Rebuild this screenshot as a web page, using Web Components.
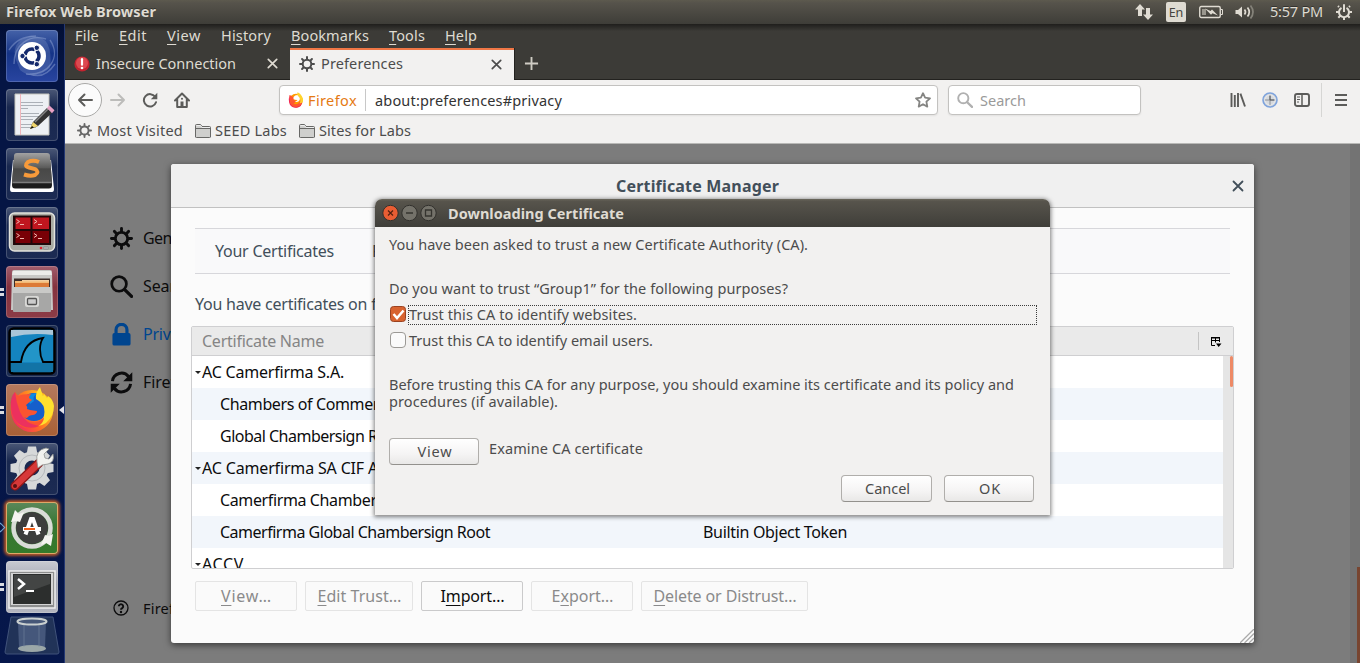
<!DOCTYPE html>
<html lang="en">
<head>
<meta charset="utf-8">
<title>Preferences</title>
<style>
html,body{margin:0;height:663px;overflow:hidden}
body{font:14.5px/18px "Noto Sans","Open Sans",sans-serif;background:#7c7c7c;--lift:-1px}
</style>
</head>
<body>
<ubuntu-desktop></ubuntu-desktop>
<script>
const define=(name,html,init)=>customElements.define(name,class extends HTMLElement{
  connectedCallback(){
    if(this.shadowRoot)return;
    const t=document.createElement('template');
    t.innerHTML=typeof html==='function'?html(this):html;
    this.attachShadow({mode:'open'}).append(t.content.cloneNode(true));
    if(init)init(this);
  }
});

/* A single-line label tracked to a given width; <u> marks its access key. */
define('fit-text','<style>:host{display:inline-block;white-space:pre;flex:none;transform:translateY(var(--lift,0))}span{display:inline-block;text-underline-offset:3px;text-decoration-thickness:1px}</style><span><slot></slot></span>',el=>{
  const w=+el.getAttribute('w'),s=el.shadowRoot.querySelector('span');
  if(!w)return;
  el.style.width=w+'px';
  s.style.letterSpacing=((w-s.getBoundingClientRect().width)/el.textContent.length).toFixed(4)+'px';
});

const gear=()=>{let s='';for(let i=0;i<8;i++)s+=`<path d="M0-7V-5" transform="rotate(${i*45})"/>`;return `<g transform="translate(8 8)" fill="none" stroke="currentColor" stroke-width="2" stroke-linecap="round"><circle r="4.300"/>${s}</g>`};
const icons={
 back:'<path d="M15 8H2M7.5 2.5 2 8l5.500 5.500" fill="none" stroke="currentColor" stroke-width="2" stroke-linecap="round" stroke-linejoin="round"/>',
 forward:'<path d="M1 8h13M8.500 2.500 14 8l-5.500 5.500" fill="none" stroke="currentColor" stroke-width="2" stroke-linecap="round" stroke-linejoin="round"/>',
 reload:'<path d="M13.200 4.800A6.200 6.200 0 1 0 14 10.200" fill="none" stroke="currentColor" stroke-width="2" stroke-linecap="round"/><path d="M15.300.800v6.500H8.800z" fill="currentColor"/>',
 home:'<path d="M1 8.500 8 1.500l7 7M3.200 7.500V15h9.600V7.500" fill="none" stroke="currentColor" stroke-width="2" stroke-linecap="round" stroke-linejoin="round"/><path d="M6.500 15V9.500h3V15z" fill="currentColor"/><circle cx="8" cy="6.800" r="1" fill="currentColor"/>',
 gear:gear(),
 close:'<path d="M3.500 3.500l9 9M12.500 3.500l-9 9" stroke="currentColor" stroke-width="1.800" stroke-linecap="round"/>',
 plus:'<path d="M8 1v14M1 8h14" stroke="currentColor" stroke-width="2"/>',
 error:'<circle cx="8" cy="8" r="7.600" fill="#c4232f"/><circle cx="8" cy="7" r="6" fill="#dc4950"/><path d="M8 3.200v5.500" stroke="#fff" stroke-width="2.200" stroke-linecap="round"/><circle cx="8" cy="12" r="1.300" fill="#fff"/>',
 folder:'<path d="M.500 14V2.500q0-1 1-1h4l1.500 2h7.500q1 0 1 1V14q0 .500-1 .500h-13q-1 0-1-.500z" fill="#cfcfcd" stroke="#686866"/><path d="M1 5.500h14.500" stroke="#686866"/><path d="M1.500 2.500h4l1.500 2h8" stroke="#eee" fill="none"/>',
 star:'<path d="M8 1.200l2.100 4.500 4.900.600-3.600 3.400.900 4.900L8 12.200l-4.300 2.400.900-4.900L1 6.300l4.900-.600z" fill="none" stroke="currentColor" stroke-width="1.800" stroke-linejoin="round"/>',
 search:'<circle cx="6.300" cy="6.200" r="5.100" fill="none" stroke="currentColor" stroke-width="1.900"/><path d="M10.200 10.200l4.800 4.700" stroke="currentColor" stroke-width="2.300" stroke-linecap="round"/>',
 library:'<path d="M1.500 1v14M4.800 3v12M8 1v14" stroke="currentColor" stroke-width="1.900"/><path d="M10.400 1.600 15 14.500" stroke="currentColor" stroke-width="1.900"/>',
 globe:'<circle cx="8" cy="8" r="7" fill="#d6d9dd" stroke="#7ea3dc" stroke-width="1.600"/><circle cx="8" cy="8" r="5" fill="none" stroke="#f3f3f3" stroke-width=".600"/><path d="M3 8h10M8 3v10" stroke="#8b9097"/><path d="M8 4v4h4" stroke="#55595e" fill="none"/>',
 sidebar:'<rect x="1" y="2" width="14" height="12" rx="2" fill="none" stroke="currentColor" stroke-width="1.900"/><path d="M8 2v12" stroke="currentColor" stroke-width="1.500"/><path d="M3 5h3M3 7.500h3M3 10h2" stroke="currentColor" stroke-width="1"/>',
 menu:'<path d="M2 3h12M2 8h12M2 13h12" stroke="currentColor" stroke-width="2"/>',
 lock:'<path d="M4.200 8V4.700a3.800 3.800 0 0 1 7.600 0V8" fill="none" stroke="currentColor" stroke-width="2.200"/><rect x="1.700" y="7" width="12.600" height="8.700" rx="1.300" fill="currentColor"/>',
 sync:'<path d="M1.700 7A6.300 6.300 0 0 1 13 4M14.300 9A6.300 6.300 0 0 1 3 12" fill="none" stroke="currentColor" stroke-width="2.100"/><path d="M15.500.800v6.400H9.200zM.500 15.200V8.800h6.300z" fill="currentColor"/>',
 help:'<circle cx="8" cy="8" r="7" fill="none" stroke="currentColor" stroke-width="1.300"/><path d="M5.800 6.300a2.200 2.100 0 1 1 3.400 1.800Q8 8.800 8 9.800" fill="none" stroke="currentColor" stroke-width="1.900"/><circle cx="8" cy="12" r="1.200" fill="currentColor"/>',
 picker:'<path d="M7 12.500H3.500v-8h8V9M3.500 7.500h8M7.500 4.500v5" fill="none" stroke="#000"/><path d="M3 4h9v1.500H3zM8 10.500h5.500L10.700 14z"/>',
 firefox:'<circle cx="8" cy="8.600" r="6.800" fill="#ff9a00"/><path d="M1.500 3q0 4 1.500 6 2 4 5 4 3.500-.300 5-4 2.400 4-2.500 6.200Q5 17 1.800 12.500 0 8 1.500 3z" fill="#f0225c"/><path d="M1.500 3q2 .500 3 1.800l2.800.200-2 2.500q.500 1 3 1.200Q7 11 5.500 11.500 10 14 12.500 8q3 5-3 6.800Q4 16 2 11z" fill="#ff5630"/><path d="M9.500.300q-1 3.200 1.500 4.700 2.500 3 .500 6.500 4-.500 3.500-4.500Q13.500 2 9.500.300z" fill="#ffd42c"/><path d="M5.500 5q1.500-2 3.800-2 3 2.500 2.400 5Q10 11 7 9.500q2-.300 2.500-1.500-3-.200-4-1z" fill="#fff"/>'
};
define('ui-icon',el=>`<style>:host{display:block;flex:none;width:${el.getAttribute('size')||16}px;height:${el.getAttribute('size')||16}px}svg{display:block;width:100%;height:100%}</style><svg viewBox="0 0 16 16">${icons[el.getAttribute('name')]}</svg>`);

/* ---------- top panel ---------- */
define('top-panel',`<style>
:host{display:flex;align-items:center;height:24px;box-sizing:border-box;padding:0 8px 0 6px;background:linear-gradient(#5d5a4e,#56534b 12%,#3e3d38);color:#dfdbd2;text-shadow:0 -1px #33322e}
b{flex:1}svg{display:block;flex:none}.en{background:#dfdbd2;color:#45443e;width:20px;height:20px;border-radius:2px;margin-right:13px;text-align:center;font-size:12.5px;line-height:21px;text-shadow:none}
</style>
<b><fit-text w="150">Firefox Web Browser</fit-text></b>
<svg width="18" height="18" viewBox="0 0 18 18" style="margin-right:13px" fill="#dfdbd2"><path d="M5 1 0 6.500h3V13h4V6.500h3zM13 17l-5-5.500h3V5h4v6.500h3z"/></svg>
<span class="en">En</span>
<svg width="25" height="14" viewBox="0 0 25 14" style="margin-right:11px"><rect x=".750" y="1.500" width="20.500" height="11" rx="1.500" fill="none" stroke="#dfdbd2" stroke-width="1.400"/><path d="M3 4h4v6H3z" fill="#9a978e"/><path d="M22 4.500h1.500v5H22" fill="none" stroke="#dfdbd2"/><path d="M6 3.500l5.500 2.500 1.500-1.500L19 10.500l-5.500-2.300-1.500 1.500z" fill="#dfdbd2"/></svg>
<svg width="20" height="16" viewBox="0 0 20 16" style="margin-right:15px" fill="none" stroke="#dfdbd2" stroke-width="1.700"><path d="M.500 6H3l4-3.500v11L3 10H.500z" fill="#dfdbd2" stroke="none"/><path d="M9.500 5.500q2 2.500 0 5M12.500 3.500q3.500 4.500 0 9"/><path d="M15.500 1.500q5 6.500 0 13" stroke="#85837a"/></svg>
<fit-text w="53">5:57 PM</fit-text>
<svg width="16" height="16" viewBox="-8 -8 16 16" style="margin-left:13px" fill="none" stroke="#dfdbd2" stroke-width="2"><path d="M-2.500-4.200A5 5 0 1 0 2.500-4.200M0-7.800V0M5-5 6-6M5 0h3M4 4l1.700 1.700M0 5v3M-4 4l-1.700 1.700M-5 0h-3M-5-5l-1-1"/></svg>`);

/* ---------- launcher ---------- */
let cog='';for(let i=0;i<8;i++)cog+=`<path d="M-4-21.500h8l1.500 8h-11z" transform="rotate(${i*45})"/>`;
const art={
 dash:'<g fill="none" stroke="#8ba0d2" stroke-width="1.400" opacity=".500"><path d="M8 34C8 14 24 4 40 9M44 10C56 28 42 46 20 44M3 20Q12 6 30 6M49 34Q38 50 24 44"/></g><path d="M10 30Q4 12 24 6 48 4 44 38 28 52 14 40z" fill="#a9b9df" opacity=".220"/><circle cx="26" cy="26" r="14" fill="#fff"/><circle cx="26" cy="26" r="7" fill="none" stroke="#14296c" stroke-width="3.500" stroke-dasharray="12.700 2" stroke-dashoffset="6.400"/><g fill="#14296c" stroke="#fff"><circle cx="16.500" cy="26" r="2.700"/><circle cx="30.800" cy="17.800" r="2.700"/><circle cx="30.800" cy="34.200" r="2.700"/></g>',
 edit:'<path d="M9 5h34v41H9z" fill="#edf0f4" stroke="#c5c5bd"/><path d="M14.500 5v41" stroke="#efb6bb"/><path d="M15 13.500h22M15 16.500h22M15 19.500h7M15 24.500h18M15 27.500h22M15 30.500h12M15 35.500h18M15 38.500h15" stroke="#a4a8b0" stroke-width=".900"/><path d="M24 40l3-7L41 19l5 5-14 13z" fill="#333"/><path d="M29 33 42 20" stroke="#858585" stroke-width="1.500"/><path d="M24 40l3-7 5 4z" fill="#f2d76c"/><path d="M24 40l2-3 2 1.500z" fill="#111"/><path d="M41 19l2.500-2.500 5 4.800-2.500 3z" fill="#e9a2c6"/>',
 sublime:'<defs><linearGradient id="k" x1="0" y1="0" x2="0" y2="1"><stop stop-color="#a2a2a2"/><stop offset=".500" stop-color="#5c5c5b"/><stop offset=".550" stop-color="#484847"/><stop offset="1" stop-color="#505050"/></linearGradient></defs><path d="M7 12 4 41q0 3 2 3h40q2 0 2-3l-3-29z" fill="#fff"/><path d="M8 8 6 37q0 3.500 3 3.500h34q3 0 3-3.500L44 8z" fill="#1c1c1c"/><path d="M8 8q0-3 3-3h30q3 0 3 3l2 26H6z" fill="url(#k)"/><path d="M6.500 34.500h39" stroke="#7d7d7d" stroke-width="1.300"/><path d="M33 14q-6-2.500-11 0-4.500 4 1 5.500l6 1.500q5 3 0 6-5 1.500-11-.500" fill="none" stroke="#f79a3a" stroke-width="4"/>',
 monitor:'<rect x="3.500" y="6" width="45" height="38" rx="5" fill="#a9aba3" stroke="#e4e3dd" stroke-width="1.500"/><rect x="7" y="8.500" width="38" height="29.500" fill="#21080a"/><path d="M9.500 10.500h15v11.500H9.500zM26.500 10.500h16.500v11.500H26.500z" fill="#c0161f"/><path d="M9.500 24h15V36H9.500zM26.500 24H43V36H26.500z" fill="#790006"/><path d="M10.500 12.500l3 2-3 2M14 17.500h4M28 12.500l3 2-3 2M32 17.500h4M10.500 26.500l3 2-3 2M14 31.500h4M28 26.500l3 2-3 2M32 31.500h4" fill="none" stroke="#f0b5ae"/><circle cx="35" cy="41" r="1.300" fill="#e02030"/><rect x="37.500" y="39.500" width="5" height="3" rx="1" fill="#aaa" stroke="#888" stroke-width=".600"/>',
 files:'<path d="M6 6q0-2 2-2h36q2 0 2 2l1 38H5z" fill="#c8c8c6"/><path d="M7 5h38l1 4H6z" fill="#ececea"/><path d="M8 12.500h36v10H8z" fill="#3c2d28"/><path d="M9 15h34v4H9z" fill="#f3ba76"/><path d="M9 17h34v4H9z" fill="#dc7a37"/><path d="M16 14h27v1.500H16z" fill="#f2cfa0"/><path d="M7 21h38v24q0 1-1 1H8q-1 0-1-1z" fill="#a7a7a6"/><path d="M7 21h38v6H7z" fill="#c9c9c7"/><rect x="19" y="30" width="14" height="11" rx="2" fill="#d8d8d6"/><rect x="21.500" y="32.500" width="9" height="6" rx="1" fill="#ccc" stroke="#555" stroke-width="1.300"/>',
 shark:'<rect x="3.500" y="3.500" width="45" height="45" rx="4" fill="#1484bf" stroke="#000" stroke-width="2.500"/><path d="M5 5h42v5Q26 7 5 12z" fill="#a9c6d8"/><path d="M4 37h11c2-13 8-22 22-24-4 6-4 16 0 24h11" fill="#2295c8" stroke="#000" stroke-width="1.800"/><path d="M5 38h42v9H5z" fill="#1274a6"/>',
 fox:'<defs><linearGradient id="b" x1="0" y1=".800" x2="1" y2=".200"><stop stop-color="#f0206a"/><stop offset=".450" stop-color="#ff6a26"/><stop offset=".800" stop-color="#ffb31c"/></linearGradient></defs><circle cx="26" cy="27" r="21" fill="url(#b)"/><circle cx="28" cy="23" r="14" fill="#165fcb"/><path d="M20 13q5-4 12-4-6 3-4 8l-4 3z" fill="#0c8ce0"/><path d="M34 3q-5 6-4 12 7 4 8 9 2 9-4 13-8 4-15 1 11 8 21 1 8-7 8-17-1-7-6-10l-1 2-3-4-1 2z" fill="#ffe02e"/><path d="M9 8q2 3 4 4 2-2 12-2-2 2-2 4l3 2-6 5q2 2 1 4l3 1 7 1q0 3-4 4-4 0-6 3-4 0-6-3 5 9 15 7 5-1 8-5 0 6-7 10-9 4-18-2Q1 30 6 15l1 1q0-5 2-8z" fill="#fb5430"/><path d="M9 8Q4 13 5 22q0 16 14 21 8 2 14-1-14-2-19-14Q10 18 9 8z" fill="#e8286a" opacity=".800"/>',
 tools:`<g transform="translate(26 25)"><g fill="#d6d8d9">${cog}</g><circle r="12" fill="none" stroke="#d6d8d9" stroke-width="9"/><circle r="13" fill="none" stroke="#b7babd" stroke-width="1"/></g><path d="M9 43 33 20" stroke="#8f1515" stroke-width="9" stroke-linecap="round"/><path d="M9 43 33 20" stroke="#d73838" stroke-width="6.500" stroke-linecap="round"/><path d="M31 19q-2-12 9-14l3 1-5 5 1 4 4 1 4-5q2 8-5 10l-6 1-4 3z" fill="#f2f2ef" stroke="#8e908e" stroke-width=".800"/><circle cx="9" cy="43" r="2" fill="#5a1010"/>`,
 updater:'<circle cx="26" cy="26" r="16" fill="#3d3e3d"/><circle cx="26" cy="26" r="18.500" fill="none" stroke="#d9dcd7" stroke-width="4.500"/><path d="M5 20 9 8l4 4 5-2-4 10-4-1zM47 32l-2 12-5-3-5 2 4-10 4 1z" fill="#f4f4f0"/><path d="M19.500 32.500 25 17h2l5.500 15.500" fill="none" stroke="#fff" stroke-width="4"/><path d="M17 27h18" stroke="#fff" stroke-width="4"/><path d="M18 27h11" stroke="#f26019" stroke-width="2"/>',
 terminal:'<rect x="3" y="10" width="46" height="37" fill="#8d8e8e" stroke="#f0f0f0" stroke-width="1.500"/><rect x="5" y="12" width="42" height="32" fill="#d4d4d4"/><rect x="7" y="13" width="38" height="30" fill="#2c2e2d"/><path d="M8 14h36v9L8 36z" fill="#434544"/><path d="M12 18l6 5-6 5" fill="none" stroke="#fff" stroke-width="2.500"/><path d="M20 30h8" stroke="#fff" stroke-width="2"/>'
};
define('launcher-item',el=>{const bg=el.getAttribute('bg')||'linear-gradient(#4b5877,#18274f 35%,#1c2b53)';return `<style>
:host{display:block;position:relative;width:52px;height:52px;border-radius:4px;background:${bg};box-shadow:inset 0 0 0 1px rgba(255,255,255,.18)}
:host([glow]){box-shadow:inset 0 0 0 1px #dfa768,0 0 3px 2px #b45728}
svg{display:block}i{position:absolute;left:-6px;top:22px;width:4px;height:3px;background:#d9dbe1;box-shadow:0 5px #d9dbe1}
em{position:absolute;right:-6px;top:22px;border:solid transparent;border-width:4px 5px 4px 0;border-right-color:#e1e2e8}
b{position:absolute;left:-9px;top:22px;width:5px;height:5px;border:1px solid #70a7d6;transform:rotate(45deg)}
</style><svg width="52" height="52" viewBox="0 0 52 52">${art[el.getAttribute('icon')]}</svg>${el.hasAttribute('run')?'<i></i>':''}${el.hasAttribute('active')?'<em></em>':''}${el.hasAttribute('glow')?'<b></b>':''}`});
define('unity-launcher',`<style>:host{display:flex;flex-direction:column;gap:7px;align-items:flex-start;width:65px;height:639px;box-sizing:border-box;padding:6px 0 0 6px;background:linear-gradient(#020f35,#051544 8%,#051544 50%,#06174b);border-right:1px solid #243873;overflow:hidden}svg{display:block;margin:-4px 0 0 -2px}</style>
<launcher-item icon="dash" bg="linear-gradient(#4562a8,#153487 45%,#2945a0)"></launcher-item><launcher-item icon="edit"></launcher-item><launcher-item icon="sublime"></launcher-item><launcher-item icon="monitor"></launcher-item>
<launcher-item icon="files" run bg="linear-gradient(#a05d6d,#85323e 40%,#8c3c47)"></launcher-item><launcher-item icon="shark" bg="#1b2b50"></launcher-item><launcher-item icon="fox" run active bg="linear-gradient(#b5795e,#a86036)"></launcher-item><launcher-item icon="tools"></launcher-item>
<launcher-item icon="updater" glow bg="linear-gradient(#5b885b,#367632 45%,#357a2b)"></launcher-item><launcher-item icon="terminal" run bg="linear-gradient(#c8cad1,#a0a3b0 45%,#b4b6bf)"></launcher-item>
<svg width="56" height="40" viewBox="0 0 56 40"><path d="M7 1h42l6 35q0 2-2 2H3q-2 0-2-2z" fill="#213358" stroke="#40527a"/><path d="M14 6l1 25q13 6 26 0l1-25z" fill="#55678a" opacity=".700"/><ellipse cx="28" cy="32.500" rx="14" ry="3.500" fill="#9ba7a8"/><path d="M20 9v22M35 9v22" stroke="#7d8da5" opacity=".500"/><ellipse cx="28" cy="5.500" rx="14.500" ry="3" fill="#465778" stroke="#c9cfcf" stroke-width="2"/></svg>`);

/* ---------- browser chrome ---------- */
define('menu-bar','<style>:host{display:flex;gap:20px;height:24px;align-items:center;padding-left:10px;color:#dfdbd2;background:linear-gradient(#1f1e1c,#3c3b37 30%)}</style><fit-text w="24"><u>F</u>ile</fit-text><fit-text w="28"><u>E</u>dit</fit-text><fit-text w="34"><u>V</u>iew</fit-text><fit-text w="50">Hi<u>s</u>tory</fit-text><fit-text w="78"><u>B</u>ookmarks</fit-text><fit-text w="36"><u>T</u>ools</fit-text><fit-text w="32"><u>H</u>elp</fit-text>');
define('browser-tab','<style>:host{display:flex;align-items:center;width:225px;height:32px;box-sizing:border-box;padding:0 10px 0 9px;color:#dfdbd2;border-bottom:1px solid #23221f}:host([selected]){background:#f2f1f0;color:#4c4c4c;border:1px solid #23221f;border-width:0 1px 0 0;box-shadow:inset 0 2px #f07746}div{flex:1;padding-left:6px;display:flex}</style><slot name="icon"></slot><div><slot></slot></div><ui-icon name="close" size="15"></ui-icon>');
define('tab-strip','<style>:host{display:flex;height:32px;background:#3c3b37}.new{flex:1;display:flex;align-items:center;padding-left:9px;border-bottom:1px solid #23221f;color:#cfccc4;height:31px}</style><browser-tab><ui-icon slot="icon" name="error"></ui-icon><fit-text w="140">Insecure Connection</fit-text></browser-tab><browser-tab selected><ui-icon slot="icon" name="gear"></ui-icon><fit-text w="82">Preferences</fit-text></browser-tab><div class="new"><ui-icon name="plus" size="15"></ui-icon></div>');
define('nav-bar',`<style>:host{display:flex;align-items:center;height:40px;background:#f2f1f0;color:#5c5c5a;--lift:0}
.back{width:32px;height:32px;border:1px solid #a9a9a7;border-radius:50%;background:#fbfbfb;display:grid;place-items:center;margin:0 8px 0 3px}
.f{display:flex;align-items:center;box-sizing:border-box;height:30px;background:#fff;border:1px solid #c3c2c0;border-radius:4px;box-shadow:0 1px 2px #0001}
.url{width:659px;margin-left:89px;padding:0 6px 0 8px}.url span{flex:1;border-left:1px solid #c8c8c8;margin-left:8px;padding-left:9px;color:#333;height:22px;line-height:22px}.s{width:193px;margin-left:10px;padding-left:8px;color:#b0b0b0}.t{display:flex;align-items:center;margin-left:auto;gap:16px}.m{border-left:1px solid #d6d6d4;padding-left:11px;margin-left:-5px;height:34px;display:flex;align-items:center;padding-right:11px}</style>
<div class="back"><ui-icon name="back"></ui-icon></div><ui-icon name="forward" style="color:#bcbcba"></ui-icon><ui-icon name="reload" style="margin-left:16px"></ui-icon><ui-icon name="home" style="margin-left:16px"></ui-icon>
<div class="f url"><ui-icon name="firefox"></ui-icon><fit-text w="49" style="color:#e57a13;margin-left:4px">Firefox</fit-text><span><fit-text w="187">about:preferences#privacy</fit-text></span><ui-icon name="star" style="color:#858583"></ui-icon></div>
<div class="f s"><ui-icon name="search"></ui-icon><fit-text w="46" style="color:#9a9a9a;margin-left:7px">Search</fit-text></div>
<div class="t"><ui-icon name="library"></ui-icon><ui-icon name="globe"></ui-icon><ui-icon name="sidebar"></ui-icon><div class="m"><ui-icon name="menu"></ui-icon></div></div>`);
define('bookmark-bar','<style>:host{display:flex;align-items:center;height:24px;box-sizing:border-box;padding:0 0 2px 12px;background:#f2f1f0;border-bottom:1px solid #b8b8b6;color:#4c4c4c}</style><ui-icon name="gear" size="15" style="color:#666;margin-right:5px"></ui-icon><fit-text w="86">Most Visited</fit-text><ui-icon name="folder" style="margin:0 4px 0 12px"></ui-icon><fit-text w="72">SEED Labs</fit-text><ui-icon name="folder" style="margin:0 4px 0 12px"></ui-icon><fit-text w="92">Sites for Labs</fit-text>');

/* ---------- preferences page ---------- */
define('side-item','<style>:host{display:flex;align-items:center;height:48px;gap:10px;color:#0c0c0d;font-size:16px}</style><slot name="icon"></slot><slot></slot>');
define('pref-page',`<style>:host{display:block;position:relative;flex:1;height:519px;background:#7c7c7c;overflow:hidden}.side{--lift:0;display:flex;flex-direction:column;box-sizing:border-box;height:488px;padding:70px 0 0 45px}.side>:last-child{margin-top:auto}.bar{position:absolute;right:0;top:0;width:10px;height:100%;background:#737373}.bar i{position:absolute;right:0;bottom:0;width:3px;height:96px;background:#784530}
cert-manager{position:absolute;left:106px;top:20px}download-dialog{position:absolute;left:310px;top:55px}</style>
<div class="side"><side-item><ui-icon slot="icon" name="gear" size="23"></ui-icon><fit-text w="55">General</fit-text></side-item><side-item><ui-icon slot="icon" name="search" size="23"></ui-icon><fit-text w="50">Search</fit-text></side-item><side-item style="color:#00458f"><ui-icon slot="icon" name="lock" size="23"></ui-icon><fit-text w="129">Privacy &amp; Security</fit-text></side-item><side-item><ui-icon slot="icon" name="sync" size="23"></ui-icon><fit-text w="115">Firefox Account</fit-text></side-item>
<side-item style="font-size:14.5px"><ui-icon slot="icon" name="help" size="16" style="margin:0 4px 0 3px"></ui-icon><fit-text w="108">Firefox Support</fit-text></side-item></div><div class="bar"><i></i></div><cert-manager></cert-manager><download-dialog></download-dialog>`);
define('cert-row','<style>:host{display:flex;align-items:center;height:32px;box-sizing:border-box;padding-left:28px;position:relative}:host([group]){padding-left:3px}:host([alt]){background:#f2f6fb}i{display:none;border:solid transparent;border-width:3px 3px 0;border-top-color:#222;margin-right:1px}:host([group]) i{display:block}div{width:483px;display:flex}</style><i></i><div><slot></slot></div><slot name="device"></slot>');
define('pref-button',el=>`<style>:host{display:flex;align-items:center;justify-content:center;box-sizing:border-box;width:${el.getAttribute('width')}px;height:30px;border:1px solid #e4e4e4;border-radius:2px;color:#8a8a8b;background:#fafafa;padding-left:1px}:host([enabled]){color:#0c0c0d;border-color:#cacacb}</style><slot></slot>`);
define('cert-manager',`<style>:host{--lift:0;display:block;width:1083px;height:479px;background:#fbfbfb;border-radius:3px;box-shadow:0 2px 7px rgba(0,0,0,.55);font-size:16px;color:#424f5a}
header{display:flex;align-items:center;height:43px;border-bottom:1px solid #c1c1c1;background:#f0f0f0;border-radius:3px 3px 0 0}header b{flex:1;text-align:center;padding-left:2px}header ui-icon{width:16px;height:16px;margin:0 8px}
nav{margin:20px 24px 0;border:1px solid #d7d7db;border-width:1px 0;height:44px;background:#f9f9fa;display:flex;align-items:center;padding-left:20px;gap:38px}
p{margin:21px 24px 13px;height:18px;line-height:18px}
.tree{margin:0 20px;border:1px solid #cfcfd1;border-radius:2px;height:241px;overflow:hidden;background:#fff;color:#0c0c0d}
.th{height:28px;border-bottom:1px solid #cfcfd1;background:#eaeaea;color:#858585;display:flex;align-items:center;padding-left:10px}.pick{margin-left:auto;border-left:1px solid #c4c4c4;height:18px;display:flex;align-items:center;padding:0 9px}
.body{display:flex}.rows{flex:1}.sb{width:10px;height:212px;background:#e5e5e5}.sb i{display:block;margin-left:7px;width:3px;height:31px;background:#ee8a66;border-radius:2px}
footer{display:flex;gap:8px;margin:12px 24px}.grip{position:absolute;right:0;bottom:0}</style>
<header><b><fit-text w="163">Certificate Manager</fit-text></b><ui-icon name="close"></ui-icon></header>
<nav><fit-text w="119">Your Certificates</fit-text><fit-text w="48">People</fit-text></nav>
<p><fit-text w="198">You have certificates on file</fit-text></p>
<div class="tree"><div class="th"><fit-text w="122">Certificate Name</fit-text><div class="pick"><ui-icon name="picker"></ui-icon></div></div>
<div class="body"><div class="rows"><cert-row group><fit-text w="142">AC Camerfirma S.A.</fit-text></cert-row><cert-row alt><fit-text w="212">Chambers of Commerce Root</fit-text></cert-row><cert-row><fit-text w="181">Global Chambersign Root</fit-text></cert-row><cert-row group alt><fit-text w="248">AC Camerfirma SA CIF A82743287</fit-text></cert-row><cert-row><fit-text w="302">Camerfirma Chambers of Commerce Root</fit-text></cert-row><cert-row alt><fit-text w="270">Camerfirma Global Chambersign Root</fit-text><fit-text slot="device" w="144">Builtin Object Token</fit-text></cert-row><cert-row group><fit-text w="42">ACCV</fit-text></cert-row></div><div class="sb"><i></i></div></div></div>
<footer><pref-button width="102"><fit-text w="51"><u>V</u>iew…</fit-text></pref-button><pref-button width="108"><fit-text w="84"><u>E</u>dit Trust…</fit-text></pref-button><pref-button width="102" enabled><fit-text w="64">I<u>m</u>port…</fit-text></pref-button><pref-button width="102"><fit-text w="62">E<u>x</u>port…</fit-text></pref-button><pref-button width="167"><fit-text w="143"><u>D</u>elete or Distrust…</fit-text></pref-button></footer>
<svg class="grip" width="14" height="14" stroke="#aaa" stroke-width="1.300"><path d="M0 14 14 0M4.500 14 14 4.500M9 14l5-5"/></svg>`);

/* ---------- certificate download dialog ---------- */
define('gtk-button',el=>`<style>:host{display:flex;align-items:center;justify-content:center;box-sizing:border-box;width:${el.getAttribute('width')}px;height:27px;border:1px solid #b0aeab;border-bottom-color:#93918d;border-radius:4px;background:linear-gradient(#fff,#f5f4f4 60%,#e9e8e7);padding:1px 0 0 2px}</style><slot></slot>`);
define('gtk-check','<style>:host{display:flex;align-items:center;height:20px}svg{display:block;flex:none;margin:0 1px 0 0}div{flex:1;height:18px;box-sizing:content-box;border:1px solid transparent;display:flex;align-items:center}:host([checked]) div{border:1px dotted #3c3c3c;height:17px;padding-bottom:1px}.c{display:none}:host([checked]) .c{display:block}:host([checked]) .o{display:none}</style><svg width="18" height="18"><g class="o"><rect x="1.500" y=".500" width="15" height="15" rx="3.500" fill="#fafafa" stroke="#9b9995"/></g><g class="c"><rect x="1.500" y=".500" width="15" height="15" rx="3" fill="#d8632f" stroke="#9b4220"/><path d="M4.500 8 8 12l6.500-7.500" fill="none" stroke="#fff" stroke-width="2.500"/></g></svg><div><slot></slot></div>');
define('download-dialog',`<style>:host{display:block;width:675px;height:316px;border-radius:7px 7px 0 0;box-shadow:0 1px 4px 1px rgba(0,0,0,.5);background:#f2f1f0;color:#4c4c4c}
header{--lift:0;height:28px;display:flex;align-items:center;border-radius:7px 7px 0 0;background:linear-gradient(#6a675c,#57544c 8%,#3f3e39);color:#dfdbd2;padding-left:7px}header svg{margin-right:10px}
main{padding:9px 13px 0 14px}p{margin:0;height:18px;line-height:18px}.v{display:flex;gap:10px;margin-top:27px}.v>fit-text{margin-top:2px}.end{display:flex;justify-content:flex-end;gap:12px;padding:10px 3px 0 0}</style>
<header><svg width="56" height="18" viewBox="0 0 56 18" fill="none"><circle cx="8.500" cy="9" r="7.700" fill="#e95d33" stroke="#32312d"/><path d="M6 6.500l5 5M11 6.500l-5 5" stroke="#54200f" stroke-width="1.200"/><circle cx="27.500" cy="9" r="7.700" fill="#74726a" stroke="#32312d"/><path d="M24 9h7" stroke="#35342f" stroke-width="1.500"/><circle cx="46.500" cy="9" r="7.700" fill="#74726a" stroke="#32312d"/><path d="M43.500 6h6v6h-6z" stroke="#35342f" stroke-width="1.300"/></svg><b><fit-text w="176">Downloading Certificate</fit-text></b></header>
<main><p><fit-text w="419">You have been asked to trust a new Certificate Authority (CA).</fit-text></p><p style="margin-top:26px"><fit-text w="399">Do you want to trust “Group1” for the following purposes?</fit-text></p>
<gtk-check checked style="margin-top:7px"><fit-text w="228">Trust this CA to identify websites.</fit-text></gtk-check><gtk-check style="margin-top:6px"><fit-text w="244">Trust this CA to identify email users.</fit-text></gtk-check>
<p style="margin-top:25px;height:17px"><fit-text w="625">Before trusting this CA for any purpose, you should examine its certificate and its policy and</fit-text></p><p><fit-text w="169">procedures (if available).</fit-text></p>
<div class="v"><gtk-button width="90"><fit-text w="35">View</fit-text></gtk-button><fit-text w="154">Examine CA certificate</fit-text></div>
<div class="end"><gtk-button width="91"><fit-text w="45">Cancel</fit-text></gtk-button><gtk-button width="90"><fit-text w="22">OK</fit-text></gtk-button></div></main>`);
define('ubuntu-desktop','<style>:host{display:block;height:663px}main{display:flex}section{flex:1;min-width:0}</style><top-panel></top-panel><main><unity-launcher></unity-launcher><section><menu-bar></menu-bar><tab-strip></tab-strip><nav-bar></nav-bar><bookmark-bar></bookmark-bar><pref-page></pref-page></section></main>');
</script>
</body>
</html>
